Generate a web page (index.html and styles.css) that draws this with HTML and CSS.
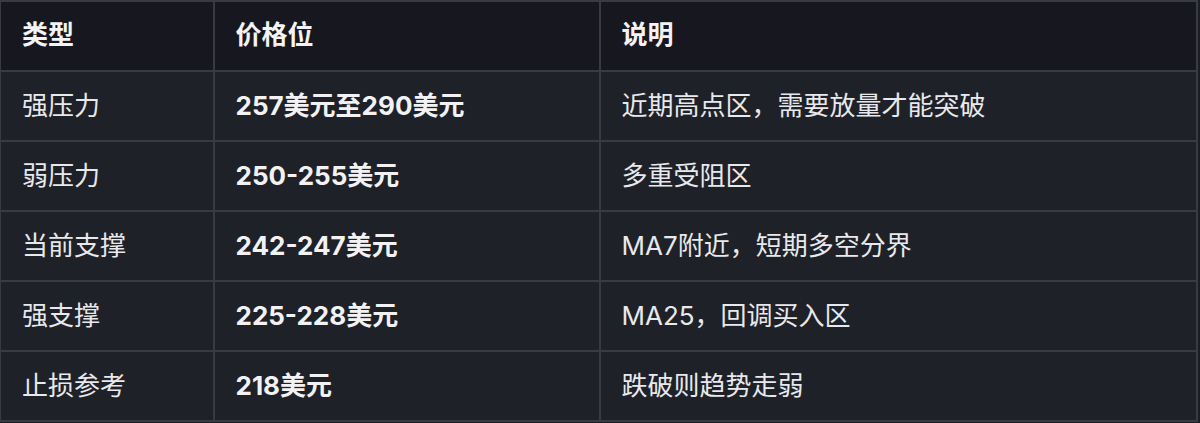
FILE: index.html
```
<!DOCTYPE html>
<html lang="zh">
<head>
<meta charset="utf-8">
<link rel="stylesheet" href="styles.css">
</head>
<body>
<table class="levels">
  <colgroup>
    <col class="c-type">
    <col class="c-price">
    <col class="c-note">
  </colgroup>
  <thead>
    <tr><th>类型</th><th>价格位</th><th>说明</th></tr>
  </thead>
  <tbody>
    <tr><td>强压力</td><td class="price">257美元至290美元</td><td>近期高点区，需要放量才能突破</td></tr>
    <tr><td>弱压力</td><td class="price">250-255美元</td><td>多重受阻区</td></tr>
    <tr><td>当前支撑</td><td class="price">242-247美元</td><td>MA7附近，短期多空分界</td></tr>
    <tr><td>强支撑</td><td class="price">225-228美元</td><td>MA25，回调买入区</td></tr>
    <tr><td>止损参考</td><td class="price">218美元</td><td>跌破则趋势走弱</td></tr>
  </tbody>
</table>
</body>
</html>
```
FILE: styles.css
```
html, body {
  margin: 0;
  padding: 0;
  background: #1b1d24;
}
body {
  width: 1200px;
  height: 423px;
  overflow: hidden;
  font-family: Inter, "Noto Sans CJK SC", sans-serif;
}
.levels {
  width: 1198px;
  border-collapse: collapse;
  table-layout: fixed;
  color: #e8e9ec;
  font-size: 26px;
}
.c-type { width: 213px; }
.c-price { width: 386px; }
.levels th,
.levels td {
  border: 2px solid #393b44;
  padding: 0 20px 0 21px;
  text-align: left;
  height: 68px;
  line-height: 1.2;
  white-space: nowrap;
}
.levels thead th {
  background: #17181f;
  font-weight: 700;
  color: #f4f4f6;
  height: 65px;
  padding-bottom: 3px;
}
.levels tbody td {
  background: #1f2129;
  font-weight: 400;
}
.levels tr > :first-child { border-left-width: 1px; }
.levels .price {
  font-weight: 700;
  color: #f2f2f4;
}
```
